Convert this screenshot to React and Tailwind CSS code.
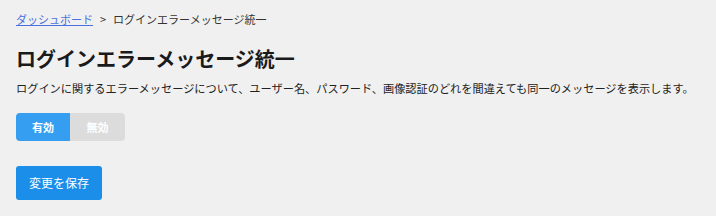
export default function App() {
  return (
    <div
      className="min-h-[216px] bg-[#f0f0f0] px-4 pt-[12px] text-[#222]"
      style={{ fontFamily: '"Noto Sans CJK JP", "Noto Sans", sans-serif' }}
    >
      {/* パンくず */}
      <nav className="flex items-center text-[11px] leading-[14px] text-[#333]">
        <a href="#" className="text-[#4c6fe0] underline">
          ダッシュボード
        </a>
        <span className="mx-[7px]">&gt;</span>
        <span>ログインエラーメッセージ統一</span>
      </nav>

      <h1 className="mt-[20px] text-[20px] font-bold leading-[26px] text-[#1a1a1a]">
        ログインエラーメッセージ統一
      </h1>

      <p className="mt-[9px] text-[11.2px] leading-[14px] text-[#222]">
        ログインに関するエラーメッセージについて、ユーザー名、パスワード、画像認証のどれを間違えても同一のメッセージを表示します。
      </p>

      {/* 有効／無効 トグル */}
      <div className="mt-[18px] flex h-[28px] w-[109px] overflow-hidden rounded-[4px]">
        <button className="w-[54px] bg-[#369ef0] text-[11px] font-bold text-white">
          有効
        </button>
        <button className="w-[55px] bg-[#dcdcdc] text-[11px] font-bold text-white">
          無効
        </button>
      </div>

      <button className="mt-[25px] h-[34px] w-[86px] rounded-[3px] bg-[#1a8ee8] text-[12px] text-white">
        変更を保存
      </button>
    </div>
  );
}
